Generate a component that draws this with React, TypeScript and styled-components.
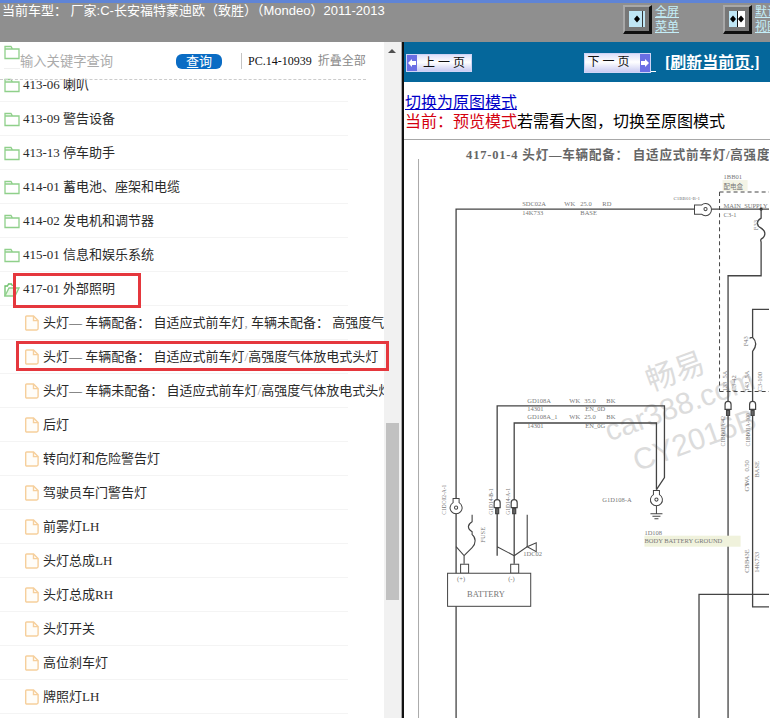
import React from 'react';
import styled, { createGlobalStyle } from 'styled-components';

const GlobalStyle = createGlobalStyle`
  html, body { margin: 0; padding: 0; background: #fff; overflow: hidden; }
  * { box-sizing: border-box; }
`;

const SANS = '"Liberation Sans", "Noto Sans CJK SC", sans-serif';
const SERIF = '"Liberation Serif", "Noto Sans CJK SC", serif';

const Page = styled.div`
  width: 770px;
  height: 718px;
  display: flex;
  flex-direction: column;
  overflow: hidden;
`;

const TopBar = styled.header`
  height: 42px;
  flex: none;
  display: flex;
  align-items: flex-start;
  justify-content: space-between;
  background: #8f8f8f;
  border-top: 3px solid #5f84d6;
  overflow: hidden;
`;

const CarTitle = styled.div`
  margin: 0 0 0 2px;
  font: 13px/16px ${SANS};
  color: #fff;
  white-space: nowrap;
`;

const ViewTools = styled.div`
  display: flex;
  gap: 44px;
  width: 147px;
  flex: none;
  margin-top: 2px;
`;

const ViewTool = styled.div`
  display: flex;
  gap: 3px;
  flex: none;
`;

const BevelButton = styled.div`
  width: 29px;
  height: 29px;
  padding: 4px;
  background: #777;
  border-top: 2px solid #a8a8a8;
  border-left: 2px solid #a8a8a8;
  border-right: 3px solid #111;
  border-bottom: 3px solid #111;
  display: flex;
`;

const BevelFace = styled.div<{ $split?: boolean }>`
  flex: 1;
  display: flex;
  background: ${p => (p.$split ? 'linear-gradient(90deg, #bfe6f5 50%, #111 50%, #111 58%, #fff 58%)' : 'linear-gradient(90deg, #bfe6f5 80%, #333 80%, #333 88%, #bfe6f5 88%)')};
`;

const ToolLabel = styled.a`
  font: 12px/15px ${SANS};
  color: #c4eef8;
  text-decoration: underline;
  width: 24px;
`;

const Main = styled.div`
  flex: 1;
  min-height: 0;
  display: flex;
`;

const Sidebar = styled.aside`
  position: relative;
  width: 402px;
  flex: none;
  display: flex;
  background: #fff;
  border-right: 1px solid #aaa;
`;

const TreeColumn = styled.div`
  width: 384px;
  flex: none;
  display: flex;
  flex-direction: column;
  overflow: hidden;
`;

const SearchBar = styled.div`
  position: relative;
  height: 38px;
  flex: none;
  margin-right: 18px;
  display: flex;
  align-items: flex-end;
  padding: 0 0 10px 20px;
  border-bottom: 1px dashed #ccc;
`;

const RootFolder = styled.span`
  position: absolute;
  left: 4px;
  top: 3px;
  line-height: 0;
`;

const StubLine = styled.span`
  position: absolute;
  left: 4px;
  bottom: 10px;
  width: 16px;
  border-top: 1px solid #f0f0f0;
`;

const SearchInput = styled.div`
  width: 156px;
  font: 13.3px/16px ${SANS};
  color: #ababab;
  margin-bottom: -1px;
`;

const QueryButton = styled.button`
  width: 46px;
  height: 15px;
  padding: 0;
  border: 0;
  border-radius: 6px;
  background: #0a6cc4;
  color: #fff;
  font: 13px/15px ${SANS};
`;

const Partno = styled.div`
  margin-left: 19px;
  padding-left: 6px;
  height: 16px;
  border-left: 1px solid #c4c4c4;
  font: 12px/16px ${SERIF};
  color: #111;
  white-space: nowrap;
`;

const CollapseAll = styled.span`
  margin-left: 6px;
  font: 12px/16px ${SANS};
  color: #8a8a8a;
  white-space: nowrap;
`;

const TreeList = styled.ul`
  list-style: none;
  margin: -12px 0 0;
  padding: 0;
`;

const Row = styled.li<{ $leaf?: boolean }>`
  height: 34px;
  display: flex;
  align-items: center;
  gap: ${p => (p.$leaf ? '4px' : '3px')};
  padding-left: ${p => (p.$leaf ? '25px' : '4px')};
  padding-top: 1px;
  border-bottom: 1px solid #f4f4f4;
  width: 348px;
  white-space: nowrap;
  font: 13px/16px ${SERIF};
  color: #2a2a2a;

  svg { flex: none; }
`;

const RowLabel = styled.span`
  flex: none;
`;

const Tint = styled.span`
  color: #9aa0a6;
`;

const Scrollbar = styled.div`
  position: relative;
  flex: 1;
  background: #f1f1f1;
`;

const ScrollArrow = styled.span`
  position: absolute;
  left: 4px;
  top: 7px;
  width: 0;
  height: 0;
  border-left: 4px solid transparent;
  border-right: 4px solid transparent;
  border-bottom: 4px solid #505050;
`;

const ScrollThumb = styled.span`
  position: absolute;
  left: 2px;
  right: 2px;
  top: 381px;
  height: 177px;
  background: #c1c1c1;
`;

const RedMark = styled.div<{ $left: number; $top: number; $width: number; $height: number }>`
  position: absolute;
  left: ${p => p.$left}px;
  top: ${p => p.$top}px;
  width: ${p => p.$width}px;
  height: ${p => p.$height}px;
  border: 3px solid #e5373d;
  pointer-events: none;
`;

const Splitter = styled.div`
  width: 2px;
  flex: none;
  background: #111;
`;

const Viewer = styled.section`
  flex: 1;
  min-width: 0;
  display: flex;
  flex-direction: column;
  overflow: hidden;
`;

const NavBar = styled.nav`
  height: 40px;
  flex: none;
  background: #05679b;
  display: flex;
  align-items: center;
  padding: 1px 0 0 2px;
`;

const PageButton = styled.div<{ $next?: boolean }>`
  width: ${p => (p.$next ? '67px' : '66px')};
  height: ${p => (p.$next ? '20px' : '18px')};
  margin-left: ${p => (p.$next ? '112px' : '0')};
  display: flex;
  flex-direction: ${p => (p.$next ? 'row-reverse' : 'row')};
  background: linear-gradient(#dfe0fa, #ffffff 45%, #c9cbf2);
  border: 1px solid #cfd4f5;
`;

const ArrowCap = styled.span`
  width: 10px;
  flex: none;
  background: #6a6ee4;
  display: flex;
  align-items: center;
  justify-content: center;
`;

const PageLabel = styled.span<{ $next?: boolean }>`
  flex: 1;
  text-align: center;
  font: 12px/16px ${SANS};
  color: #111;
  letter-spacing: 3px;
  padding: ${p => (p.$next ? '0 5px 0 0' : '0 0 0 3px')};
`;

const ButtonTail = styled.span`
  width: 5px;
  height: 1px;
  flex: none;
  margin-top: 17px;
  background: #fff;
`;

const Refresh = styled.a`
  margin-left: 9px;
  font: bold 16px/18px ${SERIF};
  color: #fff;
  text-decoration: underline;
  white-space: nowrap;
`;

const ModeNote = styled.div`
  height: 58px;
  flex: none;
  padding: 11px 0 0 1px;
  font: 16px/19px ${SANS};
  color: #000;
  border-bottom: 1px solid #a8a8a8;
  white-space: nowrap;
`;

const ModeLink = styled.a`
  color: #0000c8;
  text-decoration: underline;
  display: block;
  width: fit-content;
`;

const CurrentMode = styled.span`
  color: #d4000f;
`;

const Diagram = styled.svg`
  flex: 1;
  display: block;
  width: 365px;
`;

const folders = ['413-06 喇叭', '413-09 警告设备', '413-13 停车助手', '414-01 蓄电池、座架和电缆', '414-02 发电机和调节器', '415-01 信息和娱乐系统'];

const FolderIcon = ({ open }: { open?: boolean }) => (
  <svg width="16" height="15" viewBox="0 0 16 15" fill="none" stroke="#8fd08a" strokeWidth="1.3">
    {open ? (
      <>
        <path d="M1 14V4h2.5l1-2h3l1 2" stroke="#6cc06a" />
        <path d="M1 14h10l4-8H5l-4 8z" fill="#eaf8e6" />
      </>
    ) : (
      <path d="M1 13.5V1.5h6l1.5 2.5h6.5v9.5zM1 4h7.5" />
    )}
  </svg>
);

const PageIcon = () => (
  <svg width="14" height="16" viewBox="0 0 14 16" fill="#fffdf9" stroke="#f6cf9c" strokeWidth="1.4">
    <path d="M1.7 1h6.8l4.6 4.6v8a1.4 1.4 0 0 1-1.4 1.4H1.7a1 1 0 0 1-1-1V2a1 1 0 0 1 1-1z" />
    <path d="M8.5 1v4.6h4.6" fill="none" />
  </svg>
);

const Diamonds = ({ points }: { points: number[] }) => (
  <svg width="16" height="16" viewBox="0 0 16 16">
    {points.map(x => (
      <path key={x} d={`M${x} 4.5l3 3.5-3 3.5-3-3.5z`} fill="#000" />
    ))}
  </svg>
);

const Leaf = ({ children }: { children: React.ReactNode }) => (
  <Row $leaf>
    <PageIcon />
    <RowLabel>{children}</RowLabel>
  </Row>
);

const Wire = ({ d, w = 1.3 }: { d: string; w?: number }) => (
  <path d={d} fill="none" stroke="#444" strokeWidth={w} />
);

const Note = ({ x, y, size = 6.5, children, rotate }: { x: number; y: number; size?: number; children: string; rotate?: boolean }) => (
  <text
    x={x}
    y={y}
    fontFamily="'Liberation Serif', 'Noto Sans CJK SC', serif"
    fontSize={size}
    fill="#777"
    transform={rotate ? `rotate(-90 ${x} ${y})` : undefined}
  >
    {children}
  </text>
);

const Plug = ({ x, y }: { x: number; y: number }) => (
  <g fill="#fff" stroke="#444" strokeWidth="1">
    <path d={`M${x - 3} ${y - 9}h6v4a6 6 0 1 1-6 0z`} />
    <circle cx={x} cy={y} r="1.6" />
  </g>
);

const Pin = ({ x, y }: { x: number; y: number }) => (
  <g fill="#fff" stroke="#444" strokeWidth="1.2">
    <path d={`M${x - 3} ${y}a3 3 0 0 1 6 0v5h-6z`} />
    <path d={`M${x - 1.5} ${y + 6}h3v5h-3z`} fill="#666" />
  </g>
);

const Schematic = () => (
  <Diagram viewBox="405 141 365 577" preserveAspectRatio="xMinYMin slice">
    <path d="M419.5 160V718" stroke="#aaa" strokeWidth="1" fill="none" />
    <text x="467" y="160" fontFamily="'Liberation Serif', 'Noto Sans CJK SC', serif" fontSize="12.5" fontWeight="600" fill="#666" letterSpacing="0.8">
      417-01-4 头灯—车辆配备： 自适应式前车灯/高强度气体放电式头灯
    </text>

    <g fontFamily="'Liberation Sans', 'Noto Sans CJK SC', sans-serif" fontSize="30" fill="#dcdcdc">
      <text transform="rotate(-20 651 392)" x="651" y="392">畅易</text>
      <text transform="rotate(-20 610 442)" x="610" y="442">car388.com</text>
      <text transform="rotate(-20 638 472)" x="638" y="472">CY2016B</text>
    </g>

    <rect x="723" y="181" width="25" height="11" fill="#f4f4e6" />
    <Note x={724} y={180}>1BB01</Note>
    <Note x={724} y={190}>配电盒</Note>
    <path d="M720 193H770M720 193V392M720 392H770" fill="none" stroke="#444" strokeWidth="1" strokeDasharray="4 3" />

    <Wire d="M457 718V210H695M712 210H770" />
    <path d="M695 206h7a6 6 0 1 1 0 9h-7z" fill="#fff" stroke="#444" />
    <circle cx="706" cy="210" r="1.6" fill="#fff" stroke="#444" />
    <Note x={674} y={201} size={5}>C1BB01-B-1</Note>
    <Note x={523} y={207}>SDC02A</Note>
    <Note x={565} y={207}>WK</Note>
    <Note x={581} y={207}>25.0</Note>
    <Note x={603} y={207}>RD</Note>
    <Note x={523} y={216}>14K733</Note>
    <Note x={581} y={216}>BASE</Note>
    <Note x={724} y={209}>MAIN_SUPPLY</Note>
    <Note x={724} y={218}>C3-1</Note>
    <circle cx="761.5" cy="210" r="1.6" fill="#333" />
    <Wire d="M761.5 210V219c-5 3-5 7 0 10s5 8 0 11c-1 1 0 2 0 3V276.5H728.5V718" />
    <Note x={758} y={231} rotate>F33</Note>

    <Wire d="M770 310H753V338c-1 0-2 0-3 1M753 338c4 4 4 9 0 14V607H770" />
    <Note x={748} y={347} rotate>F43</Note>
    <Note x={727} y={392} rotate>133_5A</Note>
    <Note x={749} y={392} rotate>143_5A</Note>
    <Note x={736} y={392} rotate>C3-42</Note>
    <Note x={762} y={392} rotate>C3-100</Note>
    <Note x={725} y={447} rotate size={5.5}>C1BB01A-42</Note>
    <Note x={750} y={447} rotate size={5.5}>C1BB01A-100</Note>
    <Pin x={728.5} y={405} />
    <Pin x={753} y={405} />

    <Wire d="M498 556V406.5H665V478L657 490" />
    <Wire d="M515 564V423.5H657V490" />
    <Note x={528} y={404}>GD108A</Note>
    <Note x={570} y={404}>WK</Note>
    <Note x={585} y={404}>35.0</Note>
    <Note x={607} y={404}>BK</Note>
    <Note x={528} y={412}>14301</Note>
    <Note x={586} y={412}>EN_0D</Note>
    <Note x={528} y={420}>GD108A_1</Note>
    <Note x={570} y={420}>WK</Note>
    <Note x={585} y={420}>25.0</Note>
    <Note x={607} y={420}>BK</Note>
    <Note x={528} y={429}>14301</Note>
    <Note x={586} y={429}>EN_0G</Note>

    <Plug x={657} y={500} />
    <path d="M657 506V514M651 514h12M653 516.5h8M655 519h4" stroke="#444" strokeWidth="1" fill="none" />
    <Note x={603} y={502}>G1D108-A</Note>
    <Note x={645} y={535}>1D108</Note>
    <rect x="645" y="536" width="96" height="11" fill="#f0f2dc" />
    <Note x={645} y={543.5}>BODY BATTERY GROUND</Note>

    <Plug x={457} y={508} />
    <Note x={447} y={515} size={5.5} rotate>C1DC02-A-1</Note>
    <Pin x={498} y={503} />
    <Pin x={515} y={503} />
    <Note x={494} y={515} size={5.5} rotate>G1D14-B-1</Note>
    <Note x={511} y={515} size={5.5} rotate>G1D14-A-1</Note>
    <Wire d="M457 547L465 556V564M473 515V522c-5 3-5 7 0 10v3c4 3 4 9 0 13L465 556" w={1.1} />
    <Note x={486} y={543} rotate>FUSE</Note>
    <Wire d="M498 547L515 556M528 515V547L515 556" w={1.1} />
    <path d="M528 547l9-4v9z" fill="#fff" stroke="#444" />
    <Note x={524} y={556}>1DC02</Note>

    <rect x="461.5" y="564.5" width="8" height="9" fill="#fff" stroke="#444" />
    <rect x="511.5" y="564.5" width="8" height="9" fill="#fff" stroke="#444" />
    <rect x="448.5" y="573.5" width="83" height="33" fill="#fff" stroke="#444" />
    <Note x={458} y={581}>(+)</Note>
    <Note x={509} y={581}>(-)</Note>
    <Note x={468} y={597} size={8.5}>BATTERY</Note>
    <Wire d="M770 594.5H699.5V718" />
    <Note x={749} y={486} rotate>WA</Note>
    <Note x={749} y={472} rotate>0.50</Note>
    <Note x={749} y={492} rotate>GY</Note>
    <Note x={759} y={478} rotate>BASE</Note>
    <Note x={749} y={573} rotate>CBB43E</Note>
    <Note x={759} y={573} rotate>14K733</Note>
  </Diagram>
);

export default function App() {
  return (
    <Page>
      <GlobalStyle />
      <TopBar>
        <CarTitle>当前车型：&nbsp;厂家:C-长安福特蒙迪欧（致胜）（Mondeo）2011-2013</CarTitle>
        <ViewTools>
          <ViewTool>
            <BevelButton>
              <BevelFace><Diamonds points={[8]} /></BevelFace>
            </BevelButton>
            <ToolLabel>全屏菜单</ToolLabel>
          </ViewTool>
          <ViewTool>
            <BevelButton>
              <BevelFace $split><Diamonds points={[4, 12]} /></BevelFace>
            </BevelButton>
            <ToolLabel>默认视图</ToolLabel>
          </ViewTool>
        </ViewTools>
      </TopBar>
      <Main>
        <Sidebar>
          <TreeColumn>
            <SearchBar>
              <RootFolder><FolderIcon /></RootFolder>
              <StubLine />
              <SearchInput>输入关键字查询</SearchInput>
              <QueryButton>查询</QueryButton>
              <Partno>PC.14-10939</Partno>
              <CollapseAll>折叠全部</CollapseAll>
            </SearchBar>
            <TreeList>
              {folders.map(name => (
                <Row key={name}>
                  <FolderIcon />
                  <RowLabel>{name}</RowLabel>
                </Row>
              ))}
              <Row>
                <FolderIcon open />
                <RowLabel>417-01 外部照明</RowLabel>
              </Row>
              <Leaf>头灯— 车辆配备： 自适应式前车灯<Tint>,</Tint> 车辆未配备： 高强度气体放电式头灯</Leaf>
              <Leaf>头灯— 车辆配备： 自适应式前车灯<Tint>/</Tint>高强度气体放电式头灯</Leaf>
              <Leaf>头灯— 车辆未配备： 自适应式前车灯<Tint>/</Tint>高强度气体放电式头灯</Leaf>
              <Leaf>后灯</Leaf>
              <Leaf>转向灯和危险警告灯</Leaf>
              <Leaf>驾驶员车门警告灯</Leaf>
              <Leaf>前雾灯LH</Leaf>
              <Leaf>头灯总成LH</Leaf>
              <Leaf>头灯总成RH</Leaf>
              <Leaf>头灯开关</Leaf>
              <Leaf>高位刹车灯</Leaf>
              <Leaf>牌照灯LH</Leaf>
            </TreeList>
          </TreeColumn>
          <Scrollbar>
            <ScrollArrow />
            <ScrollThumb />
          </Scrollbar>
          <RedMark $left={13} $top={231} $width={128} $height={35} />
          <RedMark $left={16} $top={299} $width={373} $height={30} />
        </Sidebar>
        <Splitter />
        <Viewer>
          <NavBar>
            <PageButton>
              <ArrowCap>
                <svg width="8" height="8" viewBox="0 0 8 8"><path d="M0 4l4-4v2h4v4H4v2z" fill="#fff" /></svg>
              </ArrowCap>
              <PageLabel>上一页</PageLabel>
            </PageButton>
            <PageButton $next>
              <ArrowCap>
                <svg width="8" height="8" viewBox="0 0 8 8"><path d="M8 4L4 0v2H0v4h4v2z" fill="#fff" /></svg>
              </ArrowCap>
              <PageLabel $next>下一页</PageLabel>
            </PageButton>
            <ButtonTail />
            <Refresh>[刷新当前页.]</Refresh>
          </NavBar>
          <ModeNote>
            <ModeLink>切换为原图模式</ModeLink>
            <CurrentMode>当前：预览模式</CurrentMode>若需看大图，切换至原图模式
          </ModeNote>
          <Schematic />
        </Viewer>
      </Main>
    </Page>
  );
}
